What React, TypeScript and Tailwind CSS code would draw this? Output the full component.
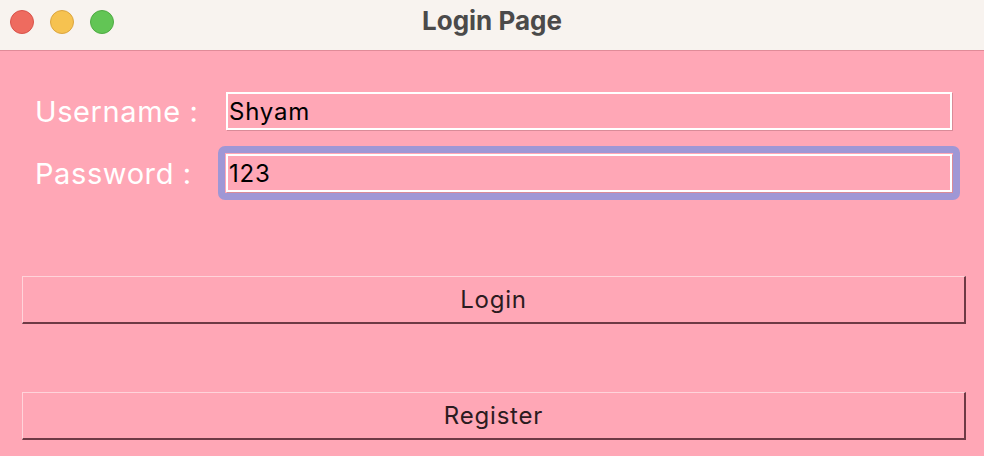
import React from "react";

const sans = { fontFamily: 'Inter, "Liberation Sans", Arial, sans-serif' };

function TrafficLights() {
  return (
    <div className="flex items-center gap-4 pl-[10px] pt-[10px]">
      <span className="block h-6 w-6 rounded-full border border-[#d9534a] bg-[#ee6b5f]" />
      <span className="block h-6 w-6 rounded-full border border-[#dca53f] bg-[#f6c250]" />
      <span className="block h-6 w-6 rounded-full border border-[#4fab43] bg-[#62c555]" />
    </div>
  );
}

function Field({ label, value, focused }: { label: string; value: string; focused?: boolean }) {
  return (
    <div className="flex h-[38px] items-center">
      <label className="w-[191px] shrink-0 pt-[2px] text-[29px] leading-[38px] tracking-[0.6px] text-white" style={sans}>
        {label}
      </label>
      <div className="relative flex-1">
        {/* focus ring */}
        {focused && <div className="absolute -inset-[8px] rounded-[7px] border-[7px] border-[#9f97d5]" />}
        <input
          readOnly
          value={value}
          className="relative block h-[38px] w-full border-2 border-white bg-[#ffa7b6] px-[1px] text-[24px] tracking-[0.8px] text-black shadow-[1px_1px_0_#d98b98] outline-none"
          style={sans}
        />
      </div>
    </div>
  );
}

function TkButton({ children }: { children: React.ReactNode }) {
  return (
    <button
      type="button"
      className="flex h-[48px] w-full items-center justify-center border-t border-l border-b-2 border-r-2 border-t-[#ffd3da] border-l-[#ffd3da] border-b-[#6e3a45] border-r-[#6e3a45] bg-[#ffa7b6] text-[24px] leading-none tracking-[0.8px] text-[#2b1b20]"
      style={sans}
    >
      {children}
    </button>
  );
}

export default function App() {
  return (
    <div className="flex h-[456px] w-[984px] flex-col overflow-hidden bg-[#ffa7b6]">
      {/* Title bar */}
      <div className="relative h-[51px] shrink-0 border-b border-[#e08b98] bg-[#f8f3ef]">
        <TrafficLights />
        <div
          className="absolute inset-x-0 top-0 flex h-[42px] items-center justify-center text-[26px] font-bold leading-none text-[#4b4a4a]"
          style={sans}
        >
          Login Page
        </div>
      </div>

      {/* Form */}
      <div className="flex flex-col pt-[41px]">
        <div className="flex flex-col gap-[24px] pl-[35px] pr-[32px]">
          <Field label="Username :" value="Shyam" />
          <Field label="Password :" value="123" focused />
        </div>
        <div className="mt-[84px] flex flex-col gap-[68px] pl-[22px] pr-[18px]">
          <TkButton>Login</TkButton>
          <TkButton>Register</TkButton>
        </div>
      </div>
    </div>
  );
}
